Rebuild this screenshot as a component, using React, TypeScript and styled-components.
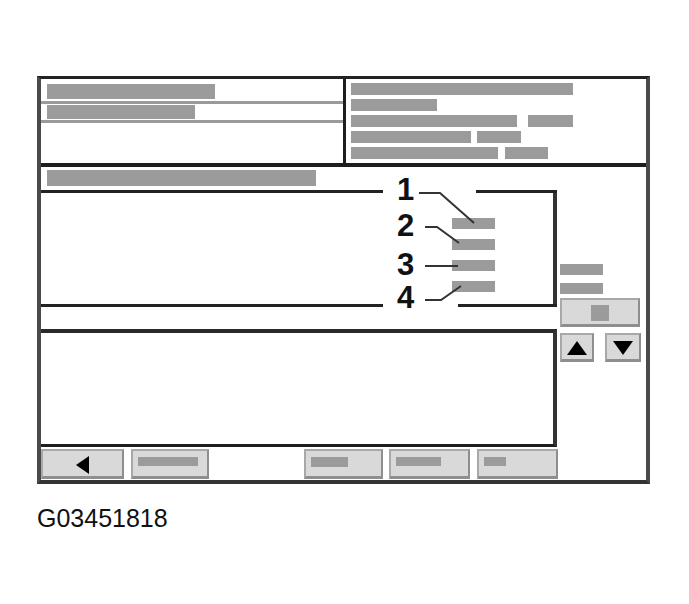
import styled, { createGlobalStyle } from 'styled-components'

const GlobalStyle = createGlobalStyle`
  body {
    margin: 0;
    background: #fff;
    font-family: "Liberation Sans", Arial, sans-serif;
  }
`

const Page = styled.div`
  padding: 76px 0 0 37px;
`

const Frame = styled.div`
  box-sizing: border-box;
  width: 613px;
  height: 408px;
  border-top: 3px solid #222;
  border-left: 4px solid #4a4a4a;
  border-right: 4px solid #4a4a4a;
  border-bottom: 4px solid #333;
  display: flex;
  flex-direction: column;
`

const Header = styled.div`
  box-sizing: border-box;
  height: 88px;
  flex: none;
  border-bottom: 4px solid #1e1e1e;
  display: grid;
  grid-template-columns: 305px 1fr;
`

const LeftPanel = styled.div`
  border-right: 3px solid #1e1e1e;
`

const FieldRow = styled.div<{ $h: number; $pt: number }>`
  box-sizing: border-box;
  height: ${p => p.$h}px;
  padding: ${p => p.$pt}px 0 0 6px;
  border-bottom: 3px solid #9a9a9a;
`

const Bar = styled.div<{ $w: number; $h?: number }>`
  width: ${p => p.$w}px;
  height: ${p => p.$h ?? 12}px;
  background: #9b9b9b;
  flex: none;
`

const RightPanel = styled.div`
  padding: 4px 0 0 5px;
  display: flex;
  flex-direction: column;
  gap: 4px;
`

const InfoRow = styled.div<{ $gap?: number }>`
  display: flex;
  gap: ${p => p.$gap ?? 0}px;
`

const Body = styled.div`
  flex: 1;
  display: grid;
  grid-template-columns: 517px 1fr;
`

const LeftCol = styled.div`
  display: flex;
  flex-direction: column;
`

const TitleRow = styled.div`
  box-sizing: border-box;
  height: 23px;
  padding: 3px 0 0 6px;
`

const GroupBox = styled.div`
  position: relative;
  width: 516px;
  height: 117px;
  display: flex;
  flex-direction: column;
`

const Edge = styled.div`
  height: 3px;
  flex: none;
  display: flex;
`

const Seg = styled.div<{ $w?: number }>`
  background: #222;
  ${p => (p.$w ? `width: ${p.$w}px; flex: none;` : 'flex: 1;')}
`

const EdgeGap = styled.div<{ $w: number }>`
  width: ${p => p.$w}px;
  flex: none;
`

const GroupBody = styled.div`
  flex: 1;
  border-right: 4px solid #333;
`

const Digit = styled.span<{ $top: number }>`
  position: absolute;
  left: 355px;
  top: ${p => p.$top}px;
  width: 19px;
  text-align: center;
  font-weight: 700;
  font-size: 31px;
  line-height: 31px;
  color: #111;
`

const CalloutBars = styled.div`
  position: absolute;
  left: 411px;
  top: 28px;
  display: flex;
  flex-direction: column;
  gap: 10px;
`

const Leaders = styled.svg`
  position: absolute;
  left: 369px;
  top: -10px;
  overflow: visible;
`

const Spacer = styled.div`
  height: 22px;
  flex: none;
`

const TextArea = styled.div`
  box-sizing: border-box;
  width: 516px;
  height: 118px;
  flex: none;
  border-top: 4px solid #2a2a2a;
  border-right: 4px solid #333;
  border-bottom: 3px solid #1e1e1e;
`

const Toolbar = styled.div`
  box-sizing: border-box;
  height: 33px;
  padding-top: 2px;
  display: flex;
  align-items: flex-start;
`

const ToolButton = styled.div<{ $w: number; $ml?: number; $center?: boolean }>`
  box-sizing: border-box;
  width: ${p => p.$w}px;
  height: 30px;
  margin-left: ${p => p.$ml ?? 0}px;
  flex: none;
  background: #d9d9d9;
  border: 2px solid #a8a8a8;
  border-right-color: #8e8e8e;
  border-bottom: 3px solid #8e8e8e;
  display: flex;
  align-items: center;
  justify-content: ${p => (p.$center ? 'center' : 'flex-start')};
  padding: ${p => (p.$center ? '2px 0 0 0' : '0 0 4px 5px')};
`

const RightCol = styled.div`
  padding: 97px 0 0 2px;
  display: flex;
  flex-direction: column;
`

const SideBars = styled.div`
  display: flex;
  flex-direction: column;
  gap: 8px;
`

const SideButton = styled(ToolButton)`
  height: 29px;
`

const ArrowRow = styled.div`
  margin-top: 6px;
  display: flex;
  gap: 11px;
`

const Caption = styled.div`
  margin-top: 22px;
  font-size: 25px;
  line-height: 25px;
  color: #111;
`

const Triangle = ({ dir }: { dir: 'left' | 'up' | 'down' }) => {
  if (dir === 'left') {
    return (
      <svg width="13" height="18" viewBox="0 0 13 18">
        <polygon points="0,9 13,0 13,18" fill="#000" />
      </svg>
    )
  }
  return (
    <svg width="20" height="14" viewBox="0 0 20 14">
      <polygon points={dir === 'up' ? '10,0 20,14 0,14' : '0,0 20,0 10,14'} fill="#000" />
    </svg>
  )
}

const App = () => {
  return (
    <Page>
      <GlobalStyle />
      <Frame>
        <Header>
          <LeftPanel>
            <FieldRow $h={25} $pt={5}>
              <Bar $w={168} $h={15} />
            </FieldRow>
            <FieldRow $h={19} $pt={1}>
              <Bar $w={148} $h={14} />
            </FieldRow>
          </LeftPanel>
          <RightPanel>
            <InfoRow>
              <Bar $w={222} />
            </InfoRow>
            <InfoRow>
              <Bar $w={86} />
            </InfoRow>
            <InfoRow $gap={11}>
              <Bar $w={166} />
              <Bar $w={45} />
            </InfoRow>
            <InfoRow $gap={6}>
              <Bar $w={120} />
              <Bar $w={44} />
            </InfoRow>
            <InfoRow $gap={7}>
              <Bar $w={147} />
              <Bar $w={43} />
            </InfoRow>
          </RightPanel>
        </Header>

        <Body>
          <LeftCol>
            <TitleRow>
              <Bar $w={269} $h={16} />
            </TitleRow>

            <GroupBox>
              <Edge>
                <Seg $w={342} />
                <EdgeGap $w={93} />
                <Seg />
              </Edge>
              <GroupBody />
              <Edge>
                <Seg $w={342} />
                <EdgeGap $w={75} />
                <Seg />
              </Edge>

              <CalloutBars>
                <Bar $w={43} $h={11} />
                <Bar $w={43} $h={11} />
                <Bar $w={43} $h={11} />
                <Bar $w={43} $h={11} />
              </CalloutBars>
              <Leaders width="70" height="125">
                <g fill="none" stroke="#333" strokeWidth="2">
                  <polyline points="9,13 30,13 64,43" />
                  <polyline points="15,47 27,47 49,63" />
                  <polyline points="15,86 48,86" />
                  <polyline points="15,120 31,120 51,106" />
                </g>
              </Leaders>
              <Digit $top={-16}>1</Digit>
              <Digit $top={20}>2</Digit>
              <Digit $top={59}>3</Digit>
              <Digit $top={92}>4</Digit>
            </GroupBox>

            <Spacer />
            <TextArea />

            <Toolbar>
              <ToolButton $w={83} $center>
                <Triangle dir="left" />
              </ToolButton>
              <ToolButton $w={78} $ml={7}>
                <Bar $w={60} $h={9} />
              </ToolButton>
              <ToolButton $w={79} $ml={95}>
                <Bar $w={37} $h={10} />
              </ToolButton>
              <ToolButton $w={81} $ml={6}>
                <Bar $w={45} $h={9} />
              </ToolButton>
              <ToolButton $w={81} $ml={7}>
                <Bar $w={22} $h={9} />
              </ToolButton>
            </Toolbar>
          </LeftCol>

          <RightCol>
            <SideBars>
              <Bar $w={43} $h={11} />
              <Bar $w={43} $h={11} />
            </SideBars>
            <SideButton $w={80} $center style={{ marginTop: 4 }}>
              <Bar $w={18} $h={16} />
            </SideButton>
            <ArrowRow>
              <SideButton $w={34} $center>
                <Triangle dir="up" />
              </SideButton>
              <SideButton $w={36} $center>
                <Triangle dir="down" />
              </SideButton>
            </ArrowRow>
          </RightCol>
        </Body>
      </Frame>
      <Caption>G03451818</Caption>
    </Page>
  )
}

export default App
